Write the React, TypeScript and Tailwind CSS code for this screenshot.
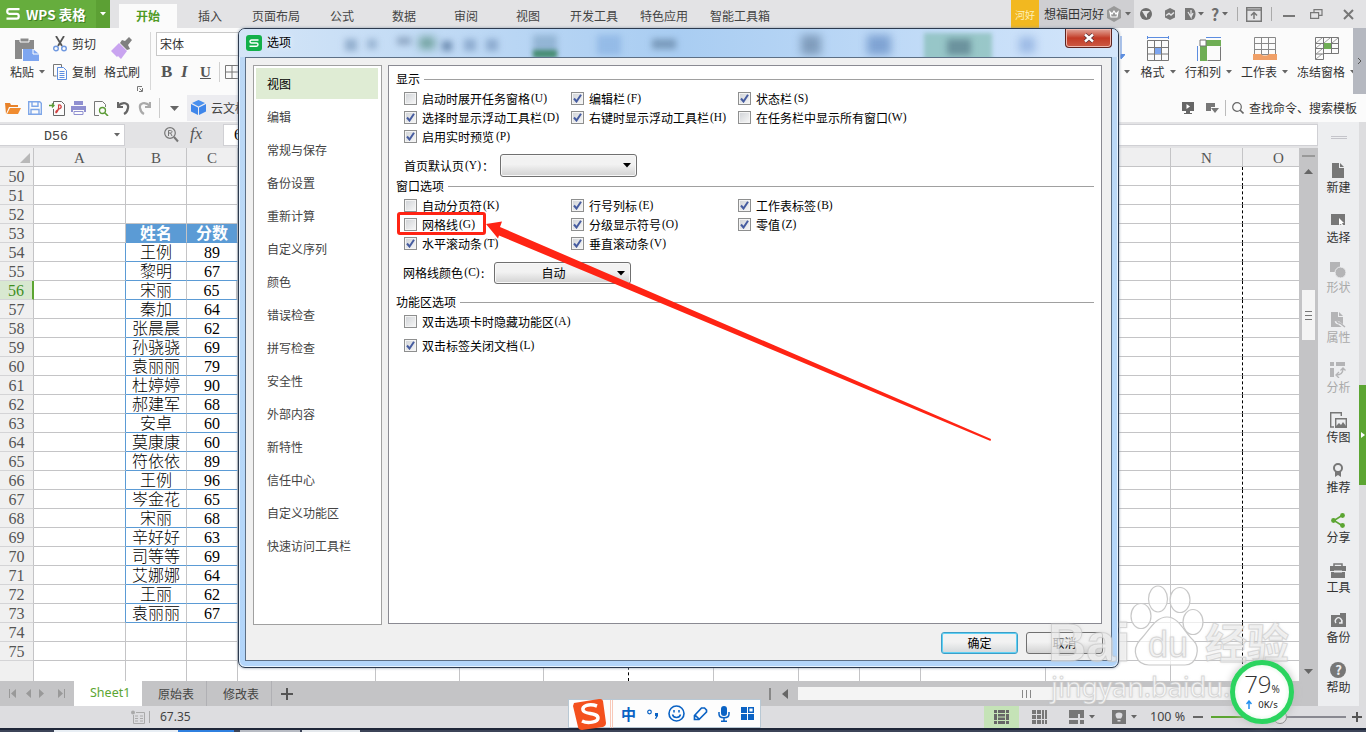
import type { ReactNode } from "react"
import clsx from "clsx"

const tabs = [
  { label: "插入", width: "w-[54px]" },
  { label: "页面布局", width: "w-[78px]" },
  { label: "公式", width: "w-[62px]" },
  { label: "数据", width: "w-[62px]" },
  { label: "审阅", width: "w-[62px]" },
  { label: "视图", width: "w-[54px]" },
  { label: "开发工具", width: "w-[70px]" },
  { label: "特色应用", width: "w-[70px]" },
  { label: "智能工具箱", width: "w-[70px]" },
]

const columns = [
  { name: "A", width: "w-[92px]" },
  { name: "B", width: "w-[61px]" },
  { name: "C", width: "w-[51px]" },
  { name: "D", width: "w-[138px]" },
  { name: "E", width: "w-[84px]" },
  { name: "F", width: "w-[84px]" },
  { name: "G", width: "w-[85px]", pageBreak: true },
  { name: "H", width: "w-[85px]" },
  { name: "I", width: "w-[85px]" },
  { name: "J", width: "w-[61px]" },
  { name: "K", width: "w-[61px]" },
  { name: "L", width: "w-[125px]" },
  { name: "M", width: "w-[125px]" },
  { name: "N", width: "w-[72px]", pageBreak: true },
  { name: "O", width: "w-[72px]" },
]

const scores: [string, number][] = [
  ["王例", 89],
  ["黎明", 67],
  ["宋丽", 65],
  ["秦加", 64],
  ["张晨晨", 62],
  ["孙骁骁", 69],
  ["袁丽丽", 79],
  ["杜婷婷", 90],
  ["郝建军", 68],
  ["安卓", 60],
  ["莫康康", 60],
  ["符依依", 89],
  ["王例", 96],
  ["岑金花", 65],
  ["宋丽", 68],
  ["辛好好", 63],
  ["司等等", 69],
  ["艾娜娜", 64],
  ["王丽", 62],
  ["袁丽丽", 67],
]

const rowNumbers = Array.from({ length: 26 }, (_, i) => 50 + i)

const optionPages = [
  "编辑",
  "常规与保存",
  "备份设置",
  "重新计算",
  "自定义序列",
  "颜色",
  "错误检查",
  "拼写检查",
  "安全性",
  "外部内容",
  "新特性",
  "信任中心",
  "自定义功能区",
  "快速访问工具栏",
]

function Caret({ className }: { className?: string }) {
  return (
    <svg width="6" height="4" viewBox="0 0 6 4" className={clsx("shrink-0 fill-[#666]", className)}>
      <path d="M0 0h6L3 3.5z" />
    </svg>
  )
}

function Icon({ w, h, className, children }: { w: number; h: number; className?: string; children: ReactNode }) {
  return (
    <svg width={w} height={h} viewBox={`0 0 ${w} ${h}`} fill="none" className={clsx("shrink-0", className)}>
      {children}
    </svg>
  )
}

function TitleBar() {
  return (
    <div className="flex h-7 shrink-0 bg-[#e3e3e5]">
      <div className="flex w-24 items-center bg-[#66ad3d] pl-1.5 text-white">
        <Icon w={14} h={12}>
          <path d="M13.5 1.2H3.2C.6 1.2.6 5.8 3.2 5.8h7.6c2.6 0 2.6 4.9 0 4.9H.5" stroke="#fff" strokeWidth="2.2" />
        </Icon>
        <span className="ml-1.5 text-[13.5px] font-bold whitespace-nowrap [text-shadow:1px_1px_0_#3f7d22]">WPS 表格</span>
      </div>
      <div className="flex w-[14px] items-center justify-center bg-[#5ca034]">
        <Caret className="fill-white" />
      </div>
      <div className="mt-1 ml-[9px] flex w-[58px] items-center justify-center bg-[#fbfbfb] text-xs font-bold text-[#4e9a24]">开始</div>
      <div className="ml-[21px] flex w-[813px] pt-1">
        {tabs.map((tab) => (
          <div key={tab.label} className={clsx("flex items-center text-xs whitespace-nowrap text-[#444]", tab.width)}>
            {tab.label}
          </div>
        ))}
      </div>
      <div className="flex w-7 items-center justify-center bg-[#f2b820] text-[10px] text-[#fdf0b8]">河好</div>
      <div className="flex w-[95px] items-center bg-[#cfcfd2] pl-[5px] text-xs whitespace-nowrap text-[#333]">
        想福田河好
        <Icon w={14} h={16} className="ml-[3px]">
          <path d="M7 0l7 4v8l-7 4-7-4V4z" fill="#999" />
          <path d="M3 6l2 2 2-3 2 3 2-2-1 5H4z" stroke="#fff" strokeWidth="1.2" />
        </Icon>
        <Caret className="ml-1 fill-[#555]" />
      </div>
      <div className="flex flex-1 items-center pl-[6px]">
        <Icon w={12} h={12}>
          <circle cx="6" cy="6" r="6" fill="#6e6e6e" />
          <path d="M2 3h8L7 6v4L5 8z" fill="#e3e3e5" />
        </Icon>
        <Icon w={12} h={12} className="ml-3">
          <path d="M6 0l5 2.5v7L6 12 1 9.5v-7z" fill="#777" />
          <path d="M2 7.5l3-2 2 1.5 3-2.5" stroke="#e3e3e5" strokeWidth="1.5" />
        </Icon>
        <Icon w={11} h={12} className="ml-[9px]">
          <path d="M0 0h6c6 0 6 12 0 12H0z" fill="#777" />
          <path d="M3 4l3 5V2M8 5L6 9" stroke="#e3e3e5" strokeWidth="1.3" />
        </Icon>
        <Caret className="ml-0.5" />
        <span className="ml-[7px] text-[16px] font-bold text-[#6e6e6e]">?</span>
        <Caret className="ml-[3px]" />
        <div className="ml-[9px] h-3.5 w-px bg-[#aaa]" />
        <Icon w={16} h={15} className="ml-2">
          <path d="M.7.7h14.6v13.6H.7zM.7 3h14.6" stroke="#777" strokeWidth="1.4" />
          <path d="M8 12V6M5 8.5L8 5.5l3 3" stroke="#777" strokeWidth="1.5" />
        </Icon>
        <div className="ml-[9px] h-3.5 w-px bg-[#aaa]" />
        <div className="mt-1 ml-[11px] h-0.5 w-3 bg-[#777]" />
        <Icon w={13} h={10} className="ml-[15px]">
          <path d="M.6 3.6h8v5.8h-8zM4 3V.6h8v5.8H9" stroke="#777" strokeWidth="1.2" />
        </Icon>
        <Icon w={11} h={11} className="ml-5">
          <path d="M1 1l9 9M10 1l-9 9" stroke="#777" strokeWidth="2" />
        </Icon>
      </div>
    </div>
  )
}

function RibbonButton({ label, width, children }: { label: string; width: string; children: ReactNode }) {
  return (
    <div className={clsx("flex shrink-0 flex-col", width)}>
      <div className="mt-2 flex h-[25px] justify-center">{children}</div>
      <div className="mt-[2px] flex items-center justify-center gap-[5px] text-xs leading-[18px] whitespace-nowrap text-[#333]">
        {label}
        <Caret />
      </div>
    </div>
  )
}

function Ribbon() {
  return (
    <div className="flex h-[66px] shrink-0 bg-[#fbfbfb]">
      <div className="flex w-[53px] shrink-0 flex-col pl-2.5">
        <Icon w={25} h={25} className="mt-[9px] ml-1">
          <path d="M1 3h19v9h-12v10H1z" fill="#8a8a8a" />
          <path d="M6 1h9v4H6z" fill="#8a8a8a" stroke="#fbfbfb" />
          <path d="M9 12h10l6 5v7H9z" fill="#7ea6f0" />
          <path d="M19 12v5h6" stroke="#fff" />
        </Icon>
        <div className="mt-px flex items-center gap-[5px] text-xs leading-[18px] text-[#333]">
          粘贴
          <Caret />
        </div>
      </div>
      <div className="flex w-[51px] shrink-0 flex-col gap-2.5 pt-[7px] text-xs text-[#333]">
        <div className="flex h-[18px] items-center gap-[5px]">
          <Icon w={14} h={16}>
            <path d="M3 0l6 10M11 0L5 10" stroke="#555" strokeWidth="1.8" />
            <circle cx="3" cy="12.5" r="2.3" stroke="#7099e0" strokeWidth="1.4" />
            <circle cx="11" cy="12.5" r="2.3" stroke="#7099e0" strokeWidth="1.4" />
          </Icon>
          剪切
        </div>
        <div className="flex h-[18px] items-center gap-[5px]">
          <Icon w={14} h={16}>
            <path d="M3.5 12H.5V.5h8V3" stroke="#777" />
            <path d="M4.5 3.5h6l3 3v9h-9z" stroke="#5c8de0" />
            <path d="M6.5 7.5h5M6.5 9.5h5M6.5 11.5h5M6.5 13.5h5" stroke="#5c8de0" />
          </Icon>
          复制
        </div>
      </div>
      <div className="flex w-[46px] shrink-0 flex-col">
        <Icon w={23} h={24} className="mt-2 ml-1.5">
          <path d="M19 1l3 3-4 5 2 4-3 1-7-7 2-3 3 1z" fill="#808080" />
          <path d="M9 7l8 8-6 8-3-3-1 1-6-6z" fill="#c9a4f0" />
        </Icon>
        <span className="mt-[3px] text-xs leading-[18px] whitespace-nowrap text-[#333]">格式刷</span>
        <Icon w={6} h={6} className="mt-[5px] ml-[33px]">
          <path d="M.5 5V.5H5M5.5 2v3.5H2M2.5 2.5l2.5 2.5" stroke="#777" />
        </Icon>
      </div>
      <div className="mt-1 h-[58px] w-px shrink-0 bg-[#d8d8d8]" />
      <div className="ml-[5px] flex w-[963px] shrink-0 flex-col pt-1">
        <div className="flex h-[24px] w-[90px] items-center border border-[#c8c8c8] bg-white pl-[3px] text-xs text-[#333]">宋体</div>
        <div className="mt-1.5 flex h-5 items-center pl-[5px] font-['Liberation_Serif',serif] text-[17px] font-bold text-[#555]">
          <span className="w-5">B</span>
          <span className="w-[19px] italic">I</span>
          <span className="w-[19px] text-[15px] underline">U</span>
          <div className="h-5 w-px bg-[#d0d0d0]" />
          <Icon w={14} h={14} className="ml-[5px]">
            <path d="M.5.5h13v13H.5zM7 0v14M0 7h14" stroke="#777" />
          </Icon>
        </div>
      </div>
      <div className="flex w-[18px] shrink-0 flex-col">
        <Icon w={6} h={24} className="mt-2">
          <path d="M2 0v22M2 23l4-4.5H2z" stroke="#5c8de0" fill="#5c8de0" />
        </Icon>
        <Caret className="mt-[10px] ml-[5px]" />
      </div>
      <RibbonButton label="格式" width="w-[42px]">
        <Icon w={22} h={25}>
          <path d="M.5 4.5h21v20H.5zM7.5 4v20M14.5 4v20M0 11.5h22M0 18h22" stroke="#777" />
          <path d="M0 1.5h22M.5 0v3M21.5 0v3" stroke="#5c8de0" />
          <path d="M8 12h6v6H8z" fill="#7ea6f0" />
        </Icon>
      </RibbonButton>
      <RibbonButton label="行和列" width="w-[59px]">
        <Icon w={24} h={25}>
          <path d="M3 4h21v6H10v15H3z" fill="#6fae55" />
          <path d="M3 4h6v6H3z" fill="#fff" stroke="#777" />
          <path d="M10.5 24.5h13v-14" stroke="#777" />
          <path d="M9 1.5h15M.5 10v15" stroke="#5c8de0" />
        </Icon>
      </RibbonButton>
      <RibbonButton label="工作表" width="w-[53px]">
        <Icon w={24} h={25}>
          <path d="M1.5 1.5h21v17h-21zM8.5 1v17M15.5 1v17M1 7.5h22M1 13.5h22" stroke="#888" />
          <path d="M0 18h8c1 2 7 2 8 0h8v6H0z" fill="#f0a068" />
        </Icon>
      </RibbonButton>
      <RibbonButton label="冻结窗格" width="w-[62px] pl-[9px]">
        <Icon w={24} h={25}>
          <path d="M.5 1.5h23v16h-15v6h-8zM8.5 1v17M16.5 1v17M0 7.5h24M0 12.5h24M0 18h8" stroke="#777" />
          <path d="M1 7l6-5M9 7l6-5M17 7l6-5M1 12l6-5M1 18l6-5M1 23l6-5" stroke="#888" strokeWidth=".8" />
          <path d="M9 7h7v6H9z" fill="#6fae55" />
        </Icon>
      </RibbonButton>
      <div className="relative ml-auto flex w-[13px] shrink-0 items-center justify-center bg-[#b5b8c0]">
        <Icon w={5} h={8}>
          <path d="M1 1l3 3-3 3" stroke="#555" />
        </Icon>
      </div>
    </div>
  )
}

function QuickAccess() {
  return (
    <div className="flex h-7 shrink-0 items-center bg-[#fbfbfb]">
      <Icon w={16} h={13} className="ml-[5px]">
        <path d="M0 1h5l1 2h7v2H4L1 12z" fill="#e8822a" />
        <path d="M5 6h11l-3 6H2z" fill="#f08c30" />
      </Icon>
      <Icon w={14} h={14} className="ml-[7px]">
        <path d="M.7.7h11l1.6 1.6v11H.7zM4 .7v4.6h6V.7M3 13V8.5h8V13" stroke="#7ea6e8" strokeWidth="1.4" />
      </Icon>
      <Icon w={16} h={15} className="ml-[7px]">
        <path d="M4.5 3V.5h8l3 3v11h-11V8" stroke="#666" />
        <path d="M0 4.5h5M3 2.5l2 2-2 2" stroke="#5a9a35" strokeWidth="1.3" />
        <path d="M7 12c2-2 3-5 2.5-8 3-.5 4 3 .5 4M7 12c-1-2 1-3 3-4" stroke="#d04040" strokeWidth="1.2" />
      </Icon>
      <Icon w={15} h={14} className="ml-[6px]">
        <path d="M3 0h9v4H3zM0 5h15v6h-2V9H2v2H0z" fill="#8f8fd0" />
        <path d="M3 10.5h9v3H3z" stroke="#8f8fd0" />
      </Icon>
      <Icon w={15} h={15} className="ml-2">
        <path d="M5 14.5H.5V.5h8l3 3V6" stroke="#777" />
        <circle cx="8.5" cy="9.5" r="3" stroke="#5a9a35" strokeWidth="1.3" />
        <path d="M11 12l3 3" stroke="#5a9a35" strokeWidth="1.6" />
      </Icon>
      <Icon w={13} h={14} className="ml-2">
        <path d="M1 1v5h5M1 5c5-5 11-3 10 2-.5 3-2 5-4 6" stroke="#666" strokeWidth="2.2" />
      </Icon>
      <Icon w={13} h={14} className="ml-2">
        <path d="M12 1v5H7M12 5C7 0 1 2 2 7c.5 3 2 5 4 6" stroke="#aaa" strokeWidth="2.2" />
      </Icon>
      <div className="ml-2 h-5 w-px bg-[#ccc]" />
      <Icon w={9} h={5} className="ml-[10px]">
        <path d="M0 0h9L4.5 5z" fill="#666" />
      </Icon>
      <div className="ml-2 flex h-[26px] w-[932px] items-center bg-[#ececf0] pl-1 text-xs text-[#444]">
        <Icon w={15} h={16}>
          <path d="M7.5 0L14 3 7.5 6.5 1 3z" fill="#4a90ee" />
          <path d="M0 4l7 3.5V15L0 11.5zM15 4L8 7.5V15l7-3.5z" fill="#3f86ea" />
        </Icon>
        <span className="ml-[5px]">云文档</span>
      </div>
      <div className="flex h-7 flex-1 items-center pl-[63px]">
        <Icon w={12} h={12}>
          <path d="M0 0h12v9H8v2h2v1H2v-1h2V9H0z" fill="#666" />
          <path d="M4.5 2L8 4.5 4.5 7z" fill="#fff" />
        </Icon>
        <Icon w={13} h={12} className="ml-3">
          <path d="M0 1h9v4H5v4H0zM5 6h8L9 11z" fill="#777" />
        </Icon>
        <div className="ml-1.5 h-4 w-px bg-[#bbb]" />
        <Icon w={12} h={12} className="ml-1.5">
          <circle cx="5" cy="5" r="4.3" stroke="#666" strokeWidth="1.2" />
          <path d="M8 8l3.5 3.5" stroke="#666" strokeWidth="1.6" />
        </Icon>
        <span className="ml-[5px] text-xs whitespace-nowrap text-[#333]">查找命令、搜索模板</span>
      </div>
    </div>
  )
}

function FormulaBar() {
  return (
    <div className="flex h-[26px] shrink-0 items-start bg-[#e3e3e5] pt-0.5">
      <div className="flex h-[22px] w-[125px] items-center border border-l-0 border-[#d0d0d4] bg-white pl-11">
        <span className="w-[70px] pt-1 font-['Liberation_Mono',monospace] text-[13.3px] text-[#444]">D56</span>
        <Caret />
      </div>
      <Icon w={15} h={16} className="mt-[3px] ml-[39px]">
        <circle cx="6" cy="6" r="5.3" stroke="#777" strokeWidth="1.2" />
        <path d="M10 10l4 4.5" stroke="#777" strokeWidth="2" />
        <path d="M4.5 9V3.5h2c2 0 2 2.5 0 2.5h-2M6.5 6L8 9" stroke="#777" />
      </Icon>
      <span className="ml-[11px] w-[33px] font-['Liberation_Serif',serif] text-[17px] leading-5 text-[#555] italic">fx</span>
      <div className="flex h-[22px] flex-1 items-center border border-[#d0d0d4] bg-white pl-2.5 font-['Liberation_Serif',serif] text-base">65</div>
    </div>
  )
}

function GridRow({ row }: { row: number }) {
  const active = row === 56
  const isHeader = row === 53
  const score = row > 53 ? scores[row - 54] : undefined

  return (
    <div className="flex h-[19px] shrink-0 text-base leading-[20px]">
      <div
        className={clsx(
          "w-[34px] shrink-0 border-b border-b-[#d4d4d6] text-center",
          active ? "border-r-2 border-r-[#5ca532] bg-[#d8e8d0] text-[#3f8f1f]" : "border-r border-r-[#c4c4c6] bg-[#f0f0f0] text-[#555]",
        )}
      >
        {row}
      </div>
      {columns.map((column) => {
        const inTable = (column.name === "B" || column.name === "C") && (isHeader || score)
        let text: string | number = ""
        if (column.name === "B") text = isHeader ? "姓名" : (score?.[0] ?? "")
        if (column.name === "C") text = isHeader ? "分数" : (score?.[1] ?? "")
        return (
          <div
            key={column.name}
            className={clsx(
              "shrink-0 border-r border-b text-center whitespace-nowrap",
              column.width,
              inTable ? "border-b-[#5b9bd5]" : "border-b-[#c4c4c6]",
              column.pageBreak ? "border-r-black [border-right-style:dashed]" : column.name === "A" && score ? "border-r-[#5b9bd5]" : "border-r-[#c4c4c6]",
              inTable && isHeader ? "border-r-[#5b9bd5] bg-[#5b9bd5] font-bold text-white" : "font-light text-black",
              active && column.name === "C" && "border-r-2 border-r-[#5ca532]",
            )}
          >
            {text}
          </div>
        )
      })}
    </div>
  )
}

function Grid() {
  return (
    <div className="flex h-[533px] shrink-0">
      <div className="w-[1299px] overflow-hidden bg-white font-['Liberation_Serif','Noto_Sans_CJK_SC',serif]">
        <div className="flex h-[19px] bg-[#efeff0] text-[15px] leading-[21px] text-[#555]">
          <div className="flex w-[34px] shrink-0 justify-end border-r border-b border-[#c4c4c6] pt-[5px] pr-[3px]">
            <Icon w={10} h={10}>
              <path d="M10 0v10H0z" fill="#b8b8b8" />
            </Icon>
          </div>
          {columns.map((column) => (
            <div key={column.name} className={clsx("shrink-0 border-r border-b border-[#c4c4c6] text-center", column.width)}>
              {column.name}
            </div>
          ))}
        </div>
        {rowNumbers.map((row) => (
          <GridRow key={row} row={row} />
        ))}
        <div className="flex h-5">
          <div className="w-[34px] shrink-0 border-r border-[#c4c4c6] bg-[#f0f0f0]" />
          {columns.map((column) => (
            <div
              key={column.name}
              className={clsx("shrink-0 border-r", column.width, column.pageBreak ? "border-dashed border-black" : "border-[#c4c4c6]")}
            />
          ))}
        </div>
      </div>
      <div className="flex w-[19px] flex-col items-center bg-[#c4c4c6] pt-[7px] pb-[7px]">
        <div className="h-0.5 w-[13px] bg-[#999]" />
        <Icon w={9} h={5} className="mt-3">
          <path d="M4.5 0L9 5H0z" fill="#666" />
        </Icon>
        <div className="mt-[116px] flex h-[50px] w-[13px] flex-col items-center justify-center gap-[3px] bg-[#f4f4f4]">
          <div className="h-px w-[7px] bg-[#777]" />
          <div className="h-px w-[7px] bg-[#777]" />
          <div className="h-px w-[7px] bg-[#777]" />
        </div>
        <Icon w={9} h={5} className="mt-auto">
          <path d="M0 0h9L4.5 5z" fill="#666" />
        </Icon>
      </div>
    </div>
  )
}

function SheetTabs() {
  return (
    <div className="flex h-[25px] shrink-0 items-stretch bg-[#c4c4c6] text-xs text-[#444]">
      <div className="flex w-[74px] items-center pl-[9px]">
        <Icon w={56} h={9}>
          <path d="M.5 0v9M55.5 0v9" stroke="#999" />
          <path d="M7 0v9L2 4.5zM22 0v9l-5-4.5zM30 0v9l5-4.5zM49 0v9l5-4.5z" fill="#999" />
        </Icon>
      </div>
      <div className="flex w-[68px] items-center bg-white pl-4 font-['Noto_Sans',sans-serif] text-[12.5px] text-[#5ca532]">Sheet1</div>
      <div className="flex w-[65px] items-center border-r border-[#b0b0b4] pl-4">原始表</div>
      <div className="flex w-[65px] items-center border-r border-[#b0b0b4] pl-4">修改表</div>
      <div className="flex w-[497px] items-center pl-[9px]">
        <Icon w={12} h={12}>
          <path d="M6 0v12M0 6h12" stroke="#555" strokeWidth="2" />
        </Icon>
      </div>
      <div className="flex items-center">
        <div className="h-3 w-0.5 bg-[#888]" />
        <Icon w={6} h={10} className="ml-[11px]">
          <path d="M6 0v10L0 5z" fill="#666" />
        </Icon>
        <div className="ml-[10px] flex h-[13px] w-[482px] items-center gap-[3px] bg-[#f4f4f4] pl-[224px]">
          <div className="h-2 w-px bg-[#888]" />
          <div className="h-2 w-px bg-[#888]" />
          <div className="h-2 w-px bg-[#888]" />
        </div>
      </div>
    </div>
  )
}

function SideItem({ label, muted, children }: { label: string; muted?: boolean; children: ReactNode }) {
  return (
    <div className={clsx("flex h-[50px] shrink-0 flex-col items-center text-xs", muted ? "text-[#aaa]" : "text-[#333]")}>
      <div className={clsx("flex h-[18px] items-center", muted ? "text-[#b4b4b6]" : "text-[#777]")}>{children}</div>
      <span className="-mt-px leading-[18px]">{label}</span>
    </div>
  )
}

function Sidebar() {
  return (
    <div className="flex w-[41px] flex-col items-center bg-[#edeef0]">
      <div className="mt-3.5 h-[3px] w-4 shrink-0 border-y border-[#c4c4ca]" />
      <div className="mt-[22px] flex flex-col">
        <SideItem label="新建">
          <Icon w={12} h={15}>
            <path d="M0 0h7v5h5v10H0zM8 0l4 4H8z" fill="currentColor" />
          </Icon>
        </SideItem>
        <SideItem label="选择">
          <Icon w={14} h={12}>
            <path d="M0 0h14v11H0z" fill="currentColor" />
            <path d="M8 4v7l2-1 1 2 1-1-1-2h2z" fill="#fff" />
          </Icon>
        </SideItem>
        <SideItem label="形状" muted>
          <Icon w={16} h={16}>
            <path d="M0 0h10v10H0z" fill="currentColor" />
            <circle cx="10.5" cy="10.5" r="5.5" fill="currentColor" stroke="#edeef0" />
          </Icon>
        </SideItem>
        <SideItem label="属性" muted>
          <Icon w={15} h={16}>
            <path d="M0 0h7v5h5v10H0zM8 0l4 4H8z" fill="currentColor" />
            <path d="M5 9a3 3 0 003 2l5 4" stroke="#edeef0" strokeWidth="3" />
            <path d="M6 8a2.5 2.5 0 003 3l5 4" stroke="currentColor" strokeWidth="1.5" />
          </Icon>
        </SideItem>
        <SideItem label="分析" muted>
          <Icon w={16} h={16}>
            <path d="M0 0h4v4H0zM6 0h9v4H6zM0 6h4v9H0z" fill="currentColor" />
            <path d="M6 13c5 0 7-2 7-6M10.5 8.5L13 6l2.5 2.5M9 10l-3 3 3 3" stroke="currentColor" strokeWidth="1.3" />
          </Icon>
        </SideItem>
        <SideItem label="传图">
          <Icon w={17} h={16}>
            <path d="M4 15H.7V.7h10.6V4" stroke="currentColor" strokeWidth="1.4" />
            <path d="M5.7 6.7h10.6v8.6H5.7z" stroke="currentColor" strokeWidth="1.4" />
            <path d="M6 14l3-3 2 2 2-3 3 4v1H6z" fill="currentColor" />
          </Icon>
        </SideItem>
        <SideItem label="推荐">
          <Icon w={12} h={15}>
            <circle cx="6" cy="5" r="4" stroke="currentColor" strokeWidth="2" />
            <path d="M3 8v6l3-2 3 2V8z" fill="currentColor" />
            <circle cx="6" cy="5" r="2.5" fill="#edeef0" />
          </Icon>
        </SideItem>
        <SideItem label="分享">
          <Icon w={14} h={15}>
            <path d="M11 2.5L3 7.5l8 5" stroke="#5ca532" strokeWidth="1.5" />
            <circle cx="11.5" cy="2.5" r="2.4" fill="#5ca532" />
            <circle cx="2.5" cy="7.5" r="2.4" fill="#5ca532" />
            <circle cx="11.5" cy="12.5" r="2.4" fill="#5ca532" />
          </Icon>
        </SideItem>
        <SideItem label="工具">
          <Icon w={16} h={15}>
            <path d="M4 4V1h8v3" stroke="currentColor" strokeWidth="1.5" />
            <path d="M0 3h16v5H0zM1 9h14v6H1z" fill="currentColor" />
            <path d="M4 8.5h8" stroke="#edeef0" strokeWidth="2" />
          </Icon>
        </SideItem>
        <SideItem label="备份">
          <Icon w={15} h={14}>
            <path d="M0 2h9V0h6v14H0z" fill="currentColor" />
            <path d="M5 10a3.2 3.2 0 115 0M8 10h3V7" stroke="#edeef0" strokeWidth="1.3" />
          </Icon>
        </SideItem>
        <SideItem label="帮助">
          <div className="flex size-4 items-center justify-center rounded-full bg-[#777] text-[13px] font-bold text-[#edeef0]">?</div>
        </SideItem>
      </div>
    </div>
  )
}

function StatusBar() {
  return (
    <div className="flex h-[22px] shrink-0 items-center bg-[#dddde0] font-['Noto_Sans',sans-serif] text-xs text-[#444]">
      <Icon w={14} h={14} className="ml-[131px]">
        <circle cx="2" cy="2.5" r="2" fill="#aaa" />
        <path d="M5 2.5h8.5v11h-11V5M4 6h3M4 8.5h3M4 11h3M9 6h3M9 8.5h3M9 11h3" stroke="#aaa" />
      </Icon>
      <div className="ml-1 h-3 w-px bg-[#aaa]" />
      <span className="ml-2.5 w-[824px]">67.35</span>
      <div className="flex h-[22px] w-[35px] items-center justify-center bg-[#c5e3b7]">
        <Icon w={15} h={14}>
          <path d="M0 0h15v14H0z" fill="#666" />
          <path d="M3.5 0v14M11.5 0v14M0 3.5h15M3 7h9M0 10.5h15" stroke="#c5e3b7" />
        </Icon>
      </div>
      <Icon w={15} h={14} className="ml-[13px]">
        <path d="M0 0h15v14H0z" fill="#777" />
        <path d="M4.5 0v14M9.5 0v14M0 4.5h10M0 9.5h15M12.5 0v14" stroke="#dddde0" />
      </Icon>
      <Icon w={15} h={14} className="ml-[22px]">
        <path d="M0 0h15v14H0z" fill="#777" />
        <path d="M10 4v10M0 9h15" stroke="#dddde0" strokeWidth="2" />
      </Icon>
      <Caret className="ml-[5px]" />
      <Icon w={14} h={14} className="ml-[17px]">
        <path d="M0 0h14v14H0z" fill="#777" />
        <path d="M7 2.5c5 0 3.5 4 2 6H5C3.5 6.5 2 2.5 7 2.5zM5.5 10h3v1.5h-3z" fill="#dddde0" />
      </Icon>
      <Caret className="ml-[5px]" />
      <span className="ml-[13px] w-[43px] text-[12.5px] whitespace-nowrap">100 %</span>
      <div className="h-0.5 w-2.5 bg-[#666]" />
      <div className="ml-2 h-0.5 w-[62px] bg-[#5ca532]" />
      <div className="size-3.5 shrink-0 rounded-full border border-[#888] bg-[#eee]" />
      <div className="h-0.5 w-[59px] bg-[#888890]" />
      <Icon w={10} h={10} className="ml-1.5">
        <path d="M5 0v10M0 5h10" stroke="#555" strokeWidth="2" />
      </Icon>
    </div>
  )
}

function Hotkey({ value }: { value: string }) {
  return <span className="inline-block w-[18px] text-center font-['Liberation_Serif',serif] text-[11.5px]">({value})</span>
}

function Check({ label, hotkey, checked }: { label: string; hotkey: string; checked?: boolean }) {
  return (
    <div className="flex w-[167px] shrink-0 items-center whitespace-nowrap">
      <div className="flex size-[13px] shrink-0 items-center justify-center border border-[#8e8f8f] bg-linear-to-br from-[#cfd2d6] to-[#f8f8f8] shadow-[inset_0_0_0_1px_#f4f4f4]">
        {checked && (
          <Icon w={9} h={9}>
            <path d="M1 4.5L3.5 7.5 8 .8" stroke="#465ca0" strokeWidth="2" />
          </Icon>
        )}
      </div>
      <span className="ml-[5px]">{label}</span>
      <Hotkey value={hotkey} />
    </div>
  )
}

function Heading({ children }: { children: ReactNode }) {
  return (
    <div className="flex h-[18px] shrink-0 items-center gap-1 whitespace-nowrap">
      {children}
      <div className="h-px flex-1 bg-[#a0a0a0]" />
    </div>
  )
}

function Select({ value }: { value?: string }) {
  return (
    <div className="flex h-full w-[137px] items-center rounded-[3px] border border-[#707070] bg-linear-to-b from-[#f2f2f2] from-45% to-[#d2d2d2] pr-[5px] shadow-[inset_0_0_0_1px_#f8f8f8]">
      <span className="flex-1 pr-[5px] text-center">{value}</span>
      <Icon w={8} h={5}>
        <path d="M0 0h8L4 4.5z" fill="#000" />
      </Icon>
    </div>
  )
}

function OptionsDialog() {
  return (
    <div className="absolute top-7 left-[238px] flex h-[640px] w-[881px] flex-col rounded-[7px] border border-[#2c3a4e] bg-linear-to-b from-[#bcd8f5] via-[#b9d9f8] to-[#b2d5fa] text-xs text-black shadow-[inset_0_0_0_1px_#e8f4ff,0_0_3px_#8897a8]">
      <div className="relative flex h-7 shrink-0 overflow-hidden rounded-t-md bg-linear-to-r from-[#d4e5f7] via-[#a9cdf2] to-[#d4e6fb] pl-[7px]">
        <div className="absolute top-2.5 left-[106px] h-3 w-3 bg-[#6f90b4]/60 blur-[3px]" />
        <div className="absolute top-2.5 left-[128px] h-2.5 w-2.5 bg-[#6f90b4]/50 blur-[3px]" />
        <div className="absolute top-2 left-[158px] h-2 w-3.5 bg-[#5f7898]/50 blur-[3px]" />
        <div className="absolute top-2 left-[180px] h-3 w-4 bg-[#4f8a7a]/70 blur-[4px]" />
        <div className="absolute top-3 left-[203px] h-2.5 w-2.5 bg-[#4f6f98]/70 blur-[3px]" />
        <div className="absolute top-2.5 left-[225px] h-3 w-3 bg-[#6f8fb8]/60 blur-[3px]" />
        <div className="absolute top-2.5 left-[247px] h-3 w-3 bg-[#6f8fb8]/60 blur-[3px]" />
        <div className="absolute top-1.5 left-[294px] h-5 w-6 bg-[#5f88a8]/40 blur-[3px]" />
        <div className="absolute top-[21px] left-[294px] h-2 w-6 bg-[#2f8058]/80 blur-[2px]" />
        <div className="absolute top-1.5 left-[358px] h-5 w-6 bg-[#7aa5dc]/50 blur-[3px]" />
        <div className="absolute top-2.5 left-[413px] h-2.5 w-6 bg-[#587898]/60 blur-[3px]" />
        <div className="absolute top-1.5 left-[562px] h-5 w-5 bg-[#5c7898]/60 blur-[4px]" />
        <div className="absolute top-1.5 left-[628px] h-5 w-6 bg-[#5680bc]/60 blur-[4px]" />
        <div className="absolute top-1 left-[685px] h-7 w-[68px] bg-[#7ab8a8]/60 blur-[2px]" />
        <div className="absolute top-2.5 left-[708px] h-4 w-6 bg-[#4f7080]/60 blur-[3px]" />
        <div className="absolute top-2 left-[780px] h-4 w-4 bg-[#7fa2d8]/60 blur-[4px]" />
        <div className="relative mt-[6px] flex size-4 items-center justify-center rounded-[3px] bg-[#12b04a]">
          <Icon w={10} h={8}>
            <path d="M9.5 1H2.5C.5 1 .5 4 2.5 4h5c2 0 2 3.2 0 3.2H.5" stroke="#fff" strokeWidth="1.4" />
          </Icon>
        </div>
        <span className="relative ml-[5px] leading-[26px] [text-shadow:0_0_6px_white]">选项</span>
        <div className="relative mr-[6px] ml-auto flex h-[19px] w-[47px] items-center justify-center rounded-b-[4px] border border-t-0 border-[#5c2420] bg-linear-to-b from-[#e0a49a] via-[#c23a26] via-50% to-[#cc5a44] shadow-[inset_0_0_0_1px_#f0b8ae]">
          <Icon w={12} h={10}>
            <path d="M2 1.5l8 7M10 1.5l-8 7" stroke="#5a3038" strokeWidth="4" />
            <path d="M2 1.5l8 7M10 1.5l-8 7" stroke="#fff" strokeWidth="2.4" />
          </Icon>
        </div>
      </div>
      <div className="mx-1.5 mb-1.5 flex flex-1 flex-col border border-[#5c6f85] bg-[#f0f0f0]">
        <div className="flex gap-[6px] pt-[7px] pl-[7px]">
          <div className="h-[560px] w-[129px] border border-[#a0a0a0] bg-white px-0.5 pt-0.5 text-[#444]">
            <div className="flex h-[31px] w-[122px] items-center bg-[#dfecd4] pl-[11px] text-black">视图</div>
            <div className="mt-px">
              {optionPages.map((page) => (
                <div key={page} className="flex h-[33px] items-center pl-[11px]">
                  {page}
                </div>
              ))}
            </div>
          </div>
          <div className="flex h-[559px] w-[714px] flex-col border border-[#8a8a92] bg-white pt-1 pr-[7px] pl-[7px]">
            <Heading>显示</Heading>
            <div className="mt-px ml-2 grid grid-cols-[167px_167px_1fr] auto-rows-[19px]">
              <Check label="启动时展开任务窗格" hotkey="U" />
              <Check label="编辑栏" hotkey="F" checked />
              <Check label="状态栏" hotkey="S" checked />
              <Check label="选择时显示浮动工具栏" hotkey="D" checked />
              <Check label="右键时显示浮动工具栏" hotkey="H" checked />
              <Check label="在任务栏中显示所有窗口" hotkey="W" />
              <Check label="启用实时预览" hotkey="P" checked />
            </div>
            <div className="mt-2 ml-2 flex h-[23px] shrink-0 items-center">
              <span className="flex w-24 items-center whitespace-nowrap">
                首页默认页
                <Hotkey value="Y" />：
              </span>
              <Select />
            </div>
            <Heading>窗口选项</Heading>
            <div className="mt-px ml-2 grid grid-cols-[167px_167px_1fr] auto-rows-[19px]">
              <Check label="自动分页符" hotkey="K" />
              <Check label="行号列标" hotkey="E" checked />
              <Check label="工作表标签" hotkey="B" checked />
              <Check label="网格线" hotkey="G" />
              <Check label="分级显示符号" hotkey="O" checked />
              <Check label="零值" hotkey="Z" checked />
              <Check label="水平滚动条" hotkey="T" checked />
              <Check label="垂直滚动条" hotkey="V" checked />
            </div>
            <div className="mt-[9px] ml-[7px] flex h-[22px] shrink-0 items-center">
              <span className="flex w-[91px] items-center whitespace-nowrap">
                网格线颜色
                <Hotkey value="C" />:
              </span>
              <Select value="自动" />
            </div>
            <div className="mt-[9px]">
              <Heading>功能区选项</Heading>
            </div>
            <div className="mt-px ml-2 flex h-[43px] flex-col justify-between">
              <div className="flex h-[19px]">
                <Check label="双击选项卡时隐藏功能区" hotkey="A" />
              </div>
              <div className="flex h-[19px]">
                <Check label="双击标签关闭文档" hotkey="L" checked />
              </div>
            </div>
          </div>
        </div>
        <div className="mt-[7px] flex gap-2 pl-[695px]">
          <div className="flex h-[22px] w-[77px] items-center justify-center rounded-[3px] border border-[#3c9fc8] bg-linear-to-b from-[#f2f2f2] from-45% to-[#d4d8da] shadow-[inset_0_0_0_1px_#5fd0f4]">
            确定
          </div>
          <div className="flex h-[22px] w-[77px] items-center justify-center rounded-[3px] border border-[#707070] bg-linear-to-b from-[#f2f2f2] from-45% to-[#d2d2d2]">
            取消
          </div>
        </div>
      </div>
    </div>
  )
}

function Callout() {
  return (
    <>
      <div className="absolute top-[212px] left-[397px] h-[23px] w-[89px] rounded-[3px] border-[3px] border-[#ff2414]" />
      <svg width="510" height="227" viewBox="484 218 510 227" className="absolute top-[218px] left-[484px]">
        <path d="M486 224l16-2.5-2 5.5L991 439l-.5 2L499 235.5l-1 3z" fill="#ff2414" />
      </svg>
    </>
  )
}

function InputMethodBar() {
  return (
    <div className="absolute top-[699px] left-[568px] flex h-[29px] w-[193px] items-center border border-[#b8c8d4] bg-[#fdfdfd]">
      <Icon w={34} h={32} className="ml-1">
        <path d="M1 5L26 1c2 0 3 0 4 2l3 22c0 2-1 3-3 4L9 32c-2 0-4-1-4-3L0 8z" fill="#f4511e" />
        <path d="M24 8c-8-3-15 0-14 4 1 5 15 2 15 8 0 4-10 6-16 3" stroke="#fff" strokeWidth="3.5" />
      </Icon>
      <div className="ml-[3px] h-7 w-[3px] border-x border-[#f8c8b8]" />
      <span className="ml-2 text-[15px] leading-7 font-bold text-[#0a62c4]">中</span>
      <Icon w={12} h={12} className="ml-[11px]">
        <circle cx="2.5" cy="4" r="1.8" stroke="#0a62c4" strokeWidth="1.2" />
        <path d="M8 5h3v3l-2 3H8l1-3H8z" fill="#0a62c4" />
      </Icon>
      <Icon w={17} h={17} className="ml-[9px]">
        <circle cx="8.5" cy="8.5" r="7.5" stroke="#0a62c4" strokeWidth="1.6" />
        <path d="M4.5 9.5c1 4 7 4 8 0M6 5v2.5M11 5v2.5" stroke="#0a62c4" strokeWidth="1.5" />
      </Icon>
      <Icon w={15} h={15} className="ml-2">
        <path d="M1.5 13.5v-4l7-7.5h3l2 2v2l-7.5 7.5zM2 9l4 4" stroke="#0a62c4" strokeWidth="1.7" />
      </Icon>
      <Icon w={12} h={16} className="ml-[10px]">
        <rect x="3" width="6" height="10" rx="3" fill="#0a62c4" />
        <path d="M1 6v2c0 5 10 5 10 0V6M6 12v3M3 15.3h6" stroke="#0a62c4" strokeWidth="1.5" />
      </Icon>
      <Icon w={13} h={13} className="ml-[11px]">
        <path d="M0 0h6v6H0zM0 7h6v6H0zM7 7h6v6H7z" fill="#0a62c4" />
        <path d="M7.7.7h4.6v4.6H7.7z" stroke="#0a62c4" strokeWidth="1.4" />
      </Icon>
    </div>
  )
}

function Watermark() {
  return (
    <div className="pointer-events-none absolute top-[584px] left-[1046px] h-[124px] w-[250px] text-white/50 [-webkit-text-stroke:1px_#c8c8c8aa] [text-shadow:0_0_3px_#bbbbbb88]">
      <span className="absolute top-[31px] left-[2px] font-['Liberation_Sans',sans-serif] text-[53px] leading-[56px] font-bold">Bai</span>
      <svg width="80" height="84" viewBox="0 0 80 84" className="absolute top-0 left-[84px]" fill="#ffffffb0" stroke="#c8c8c8" strokeWidth="1.2">
        <ellipse cx="11" cy="32" rx="10" ry="12.5" />
        <ellipse cx="28" cy="15" rx="9.5" ry="13" />
        <ellipse cx="50" cy="16" rx="10" ry="12.5" />
        <ellipse cx="63" cy="38" rx="10" ry="12.5" />
        <path d="M37 33c12 0 17 15 26 23 8 8 4 25-8 25H19C6 81 1 66 10 56c9-9 15-23 27-23z" />
      </svg>
      <span className="absolute top-[40px] left-[102px] font-['Liberation_Sans',sans-serif] text-[36px] leading-[42px]">du</span>
      <span className="absolute top-[26px] left-[159px] text-[42px] leading-[62px] font-bold whitespace-nowrap">经验</span>
      <span className="absolute top-[86px] left-[5px] font-['Noto_Sans',sans-serif] text-[27px] leading-[34px] whitespace-nowrap text-white/80">
        jingyan.baidu.com
      </span>
    </div>
  )
}

function SpeedBall() {
  return (
    <div className="absolute top-[660px] left-[1230px] flex size-16 flex-col items-center rounded-full border-[5px] border-[#2bd45f] bg-radial from-white from-60% to-[#c0f0c8] font-['Noto_Sans',sans-serif] shadow-[0_0_8px_#bbb]">
      <div className="mt-[5px] flex items-baseline text-[#333]">
        <span className="font-['Open_Sans',sans-serif] text-[24px] leading-[27px] font-light">79</span>
        <span className="text-[10px]">%</span>
      </div>
      <div className="mt-px flex items-center gap-1.5 text-[9.5px] leading-[13px] text-[#222]">
        <Icon w={6} h={9}>
          <path d="M3 9V2M.5 4L3 1l2.5 3" stroke="#2090f0" strokeWidth="1.5" />
        </Icon>
        0K/s
      </div>
    </div>
  )
}

export default function App() {
  return (
    <div className="relative flex h-[732px] w-[1366px] flex-col overflow-hidden bg-[#e3e3e5] font-['Noto_Sans_CJK_SC',sans-serif]">
      <TitleBar />
      <Ribbon />
      <QuickAccess />
      <div className="flex h-[584px] shrink-0">
        <div className="flex w-[1318px] flex-col">
          <FormulaBar />
          <Grid />
          <SheetTabs />
        </div>
        <Sidebar />
        <div className="w-[7px] bg-[#dddddf] pt-[263px]">
          <div className="flex h-[100px] items-center justify-center bg-[#5ca532]">
            <Icon w={4} h={6}>
              <path d="M0 0l4 3-4 3z" fill="#fff" />
            </Icon>
          </div>
        </div>
      </div>
      <StatusBar />
      <div className="flex h-1 border-t-2 border-[#1e2638] bg-[#3c4458]">
        <div className="ml-[54px] w-[124px] bg-[#e8eef4]" />
        <div className="w-14 bg-[#2f80e0]" />
        <div className="ml-1.5 w-[60px] bg-[#b8bcc4]" />
        <div className="ml-0.5 w-[58px] bg-[#e4e8ec]" />
      </div>
      <OptionsDialog />
      <Callout />
      <Watermark />
      <InputMethodBar />
      <SpeedBall />
    </div>
  )
}
